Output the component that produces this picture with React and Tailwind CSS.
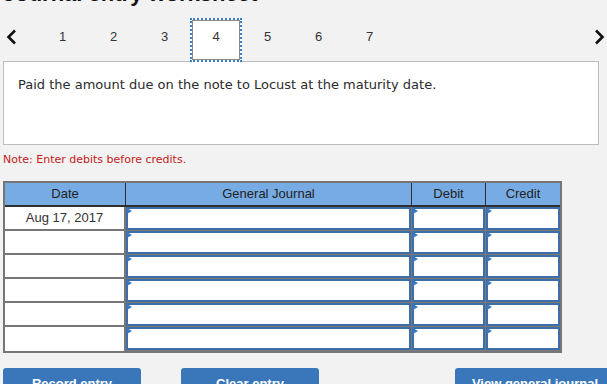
const tabs = [1, 2, 3, 4, 5, 6, 7];
const rows = ['Aug 17, 2017', '', '', '', '', ''];

const Chevron = ({ dir }) => (
  <svg width="12" height="16" viewBox="0 0 12 16" className="block">
    {dir === 'left' ? (
      <polyline points="9,1.5 2.5,8 9,14.5" fill="none" stroke="#111" strokeWidth="2.6" />
    ) : (
      <polyline points="3,1.5 9.5,8 3,14.5" fill="none" stroke="#111" strokeWidth="2.6" />
    )}
  </svg>
);

const EntryCell = ({ last }) => (
  <div className={`h-full bg-[#7a7a7a] ${last ? '' : 'pr-[1px]'} pb-[1px]`}>
    <div className="relative h-full border-2 border-[#3d6ea8] bg-white">
      <div className="absolute -left-[1px] -top-[1px] w-0 h-0 border-y-[3px] border-y-transparent border-l-[5px] border-l-[#3b78c3]" />
    </div>
  </div>
);

const App = () => {
  return (
    <div className="w-[607px] h-[384px] overflow-hidden bg-[#f2f2f2] font-['Liberation_Sans',Arial,sans-serif] text-[#333]">
      <div className="-mt-[18px] h-[24px] pl-[3px] text-[22px] leading-[24px] font-bold text-[#111] whitespace-nowrap">
        Journal entry worksheet
      </div>

      {/* step tabs */}
      <div className="mt-[12px] h-[43px] flex items-start">
        <div className="w-[37px] h-[37px] flex items-center pl-[6px]">
          <Chevron dir="left" />
        </div>
        {tabs.map((t) =>
          t === 4 ? (
            <div key={t} className="relative z-10 shrink-0 w-[52px] h-[44px] border-2 border-dotted border-[#3a7cc6] bg-white">
              <div className="h-full border border-[#8a8a8a] flex items-center justify-center pb-[7px] text-[13px] leading-none">
                {t}
              </div>
            </div>
          ) : (
            <div key={t} className="shrink-0 w-[51px] h-[37px] flex items-center justify-center text-[13px] leading-none">
              {t}
            </div>
          )
        )}
        <div className="flex-1" />
        <div className="w-[14px] h-[37px] flex items-center">
          <Chevron dir="right" />
        </div>
      </div>

      {/* description */}
      <div className="ml-[3px] w-[596px] h-[84px] border border-[#bdbdbd] bg-white pt-[15px] pl-[14px] font-['DejaVu_Sans',Verdana,sans-serif] text-[13px] leading-[16px] text-[#2b2b2b]">
        Paid the amount due on the note to Locust at the maturity date.
      </div>

      <div className="mt-[7px] h-[16px] pl-[3px] font-['DejaVu_Sans',Verdana,sans-serif] text-[11px] leading-[16px] text-[#c41a1a]">
        Note: Enter debits before credits.
      </div>

      {/* journal table */}
      <div className="mt-[13px] ml-[3px] w-[559px] border-2 border-[#767676] bg-[#7a7a7a]">
        <div className="grid grid-cols-[121px_286px_74px_74px] h-[24px] bg-[#77abe3] border-b-2 border-[#2f2f2f] text-[13px] leading-[22px] text-center text-[#222]">
          <div className="border-r border-[#2f2f2f]">Date</div>
          <div className="border-r border-[#2f2f2f]">General Journal</div>
          <div className="border-r border-[#2f2f2f]">Debit</div>
          <div>Credit</div>
        </div>
        {rows.map((d, i) => (
          <div key={i} className="grid grid-cols-[121px_286px_74px_74px] h-[24px]">
            <div className={`bg-white border-r-2 border-[#777] ${i < rows.length - 1 ? 'border-b-2' : ''} text-[13px] leading-[22px] text-center`}>
              {d}
            </div>
            <EntryCell />
            <EntryCell />
            <EntryCell last />
          </div>
        ))}
      </div>

      {/* actions */}
      <div className="mt-[15px] flex items-start text-white text-[13px] font-bold">
        <div className="shrink-0 ml-[3px] w-[138px] h-[32px] pt-[8px] rounded-t-[3px] bg-[#3a77ba] text-center leading-[16px]">
          Record entry
        </div>
        <div className="shrink-0 ml-[40px] w-[138px] h-[32px] pt-[8px] rounded-t-[3px] bg-[#3a77ba] text-center leading-[16px]">
          Clear entry
        </div>
        <div className="shrink-0 ml-[136px] w-[160px] h-[32px] pt-[8px] rounded-t-[3px] bg-[#3a77ba] text-center leading-[16px] whitespace-nowrap">
          View general journal
        </div>
      </div>
    </div>
  );
};

export default App;
